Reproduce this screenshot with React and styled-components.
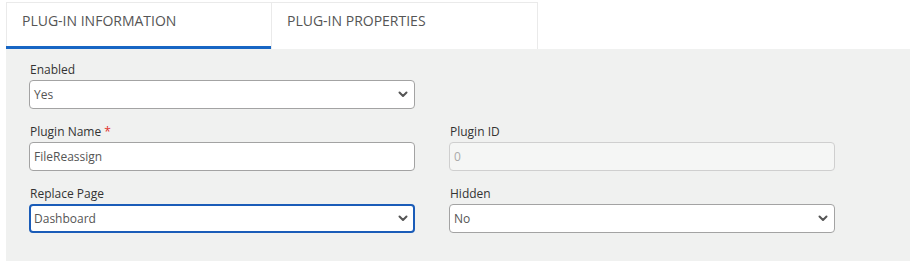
import React from "react";
import styled, { createGlobalStyle } from "styled-components";

const Global = createGlobalStyle`
  html, body { margin: 0; padding: 0; background: #ffffff; }
  body { font-family: "Open Sans", "Noto Sans", sans-serif; }
  * { box-sizing: border-box; }
`;

const Page = styled.div`
  padding: 2px 0 0 6px;
`;

const TabBar = styled.div`
  display: flex;
`;

const Tab = styled.div`
  width: 266px;
  height: 47px;
  border: 1px solid #eaeaea;
  border-bottom: none;
  ${(p) => (p.$first ? "" : "border-left: none;")}
  display: flex;
  align-items: flex-start;
  padding: 8px 0 0 15px;
  font-size: 14px;
  color: #555;
  text-transform: uppercase;
  position: relative;
  background: #fff;
  ${(p) =>
    p.$active &&
    `
    &::after {
      content: "";
      position: absolute;
      left: -1px;
      right: 0;
      bottom: 0;
      height: 3px;
      background: #1766c4;
    }
  `}
`;

const Panel = styled.div`
  background: #f0f1f0;
  padding: 13px 0 30px 23px;
  min-height: 212px;
`;

const Grid = styled.div`
  display: grid;
  grid-template-columns: 386px 386px;
  column-gap: 34px;
  row-gap: 15px;
`;

const Field = styled.div`
  display: flex;
  flex-direction: column;
`;

const Label = styled.div`
  font-size: 12px;
  line-height: 16px;
  color: #333;
  margin-bottom: 2px;
  padding-left: 1px;
`;

const Req = styled.span`
  color: #e0302c;
  margin-left: 3px;
`;

const Control = styled.div`
  height: 29px;
  border-radius: 4px;
  border: ${(p) => (p.$focus ? "2px" : "1px")} solid
    ${(p) => (p.$disabled ? "#cfcfcf" : p.$focus ? "#1a5cb8" : "#a3a3a3")};
  background: ${(p) => (p.$disabled ? "#f5f6f5" : "#fff")};
  display: flex;
  align-items: center;
  justify-content: space-between;
  padding: 0 ${(p) => (p.$focus ? 5 : 6)}px 0 ${(p) => (p.$focus ? 3 : 4)}px;
  font-size: 12px;
  color: ${(p) => (p.$disabled ? "#aaa" : "#555")};
`;

const Empty = styled.div``;

const Chevron = () => (
  <svg width="10" height="7" viewBox="0 0 10 7">
    <path d="M1.5 1.5 L5 5 L8.5 1.5" fill="none" stroke="#555" strokeWidth="2" strokeLinecap="round" strokeLinejoin="round" />
  </svg>
);

const SelectField = ({ label, value, focus }) => (
  <Field>
    <Label>{label}</Label>
    <Control $focus={focus}>
      <span>{value}</span>
      <Chevron />
    </Control>
  </Field>
);

export default function App() {
  return (
    <>
      <Global />
      <Page>
        <TabBar>
          <Tab $first $active>Plug-in Information</Tab>
          <Tab>Plug-in Properties</Tab>
        </TabBar>
        <Panel>
          <Grid>
            <SelectField label="Enabled" value="Yes" />
            <Empty />
            <Field>
              <Label>
                Plugin Name<Req>*</Req>
              </Label>
              <Control>FileReassign</Control>
            </Field>
            <Field>
              <Label>Plugin ID</Label>
              <Control $disabled>0</Control>
            </Field>
            <SelectField label="Replace Page" value="Dashboard" focus />
            <SelectField label="Hidden" value="No" />
          </Grid>
        </Panel>
      </Page>
    </>
  );
}
